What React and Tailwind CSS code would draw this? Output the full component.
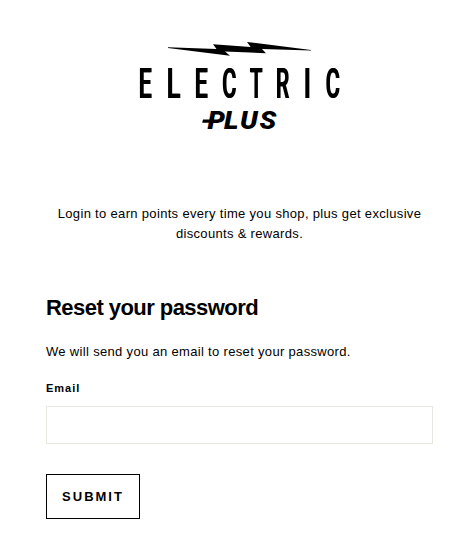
const WORDMARK = [
  { char: "E", x: 140, width: 12 },
  { char: "L", x: 168, width: 12.5 },
  { char: "E", x: 196, width: 12 },
  { char: "C", x: 223, width: 13.5 },
  { char: "T", x: 250, width: 13 },
  { char: "R", x: 277, width: 12.5 },
  { char: "I", x: 305.5, width: 4.5 },
  { char: "C", x: 326.5, width: 13.5 },
];

// ink box of each capital in Roboto Medium, in em: [left bearing, width]
const INK = {
  E: [0.073, 0.46],
  L: [0.073, 0.44],
  C: [0.055, 0.56],
  T: [0.02, 0.57],
  R: [0.073, 0.53],
  I: [0.085, 0.123],
};

const SIZE = 42;
// extra stem weight added by the drop shadow
const SPREAD = 1.4;

const SUB = [
  { char: "P", x: 207.5 },
  { char: "L", x: 224 },
  { char: "U", x: 240 },
  { char: "S", x: 259.5 },
];

function Logo() {
  return (
    <svg
      role="img"
      aria-label="Electric Plus"
      className="h-[96px] w-[210px] fill-black"
      viewBox="135 38 210 96"
    >
      <path d="M168 47.2 L216.5 48.9 L213 44.2 L250.7 47 L247 41.9 L311 50 V50.6 L262 48.9 L266 53.2 L225 51.4 L230 55.8 L168 48 Z" />
      <g className="[filter:drop-shadow(1.4px_0_0_#000)]">
        {WORDMARK.map(({ char, x, width }, i) => {
          const [left, ink] = INK[char];
          const scale = (width - SPREAD) / (ink * SIZE);
          return (
            <text
              key={i}
              transform={`translate(${x - left * SIZE * scale} 98) scale(${scale} 1)`}
              fontSize={SIZE}
              className="font-['Roboto',sans-serif] font-medium"
            >
              {char}
            </text>
          );
        })}
      </g>
      {SUB.map(({ char, x }) => (
        <text
          key={char}
          transform={`translate(${x} 129) scale(1.1 1)`}
          className="font-['Roboto',sans-serif] text-[25px] font-black italic"
        >
          {char}
        </text>
      ))}
      <path d="M203 119.5h10l-.8 3.2h-10z" />
    </svg>
  );
}

function App() {
  return (
    <main className="h-[549px] bg-white pr-[29px] pl-[46px] font-['Liberation_Sans',Arial,sans-serif] text-black">
      <header className="flex flex-col items-center pt-[38px]">
        <Logo />
        <p className="mt-[70px] text-center text-[13px] leading-5 tracking-[0.325px]">
          Login to earn points every time you shop, plus get exclusive
          <br />
          discounts &amp; rewards.
        </p>
      </header>

      <form onSubmit={(e) => e.preventDefault()}>
        <h1 className="mt-[50px] text-[22px] leading-7 font-bold tracking-[-0.55px]">
          Reset your password
        </h1>
        <p className="mt-5 text-[13px] leading-5 tracking-[0.325px]">
          We will send you an email to reset your password.
        </p>
        <label
          htmlFor="email"
          className="mt-[18px] block text-[11px] leading-4 font-bold tracking-[1px]"
        >
          Email
        </label>
        <input
          id="email"
          type="email"
          className="mt-[10px] block h-[38px] w-full border border-[#e8e8e1] px-3 text-[13px] outline-none"
        />
        <button
          type="submit"
          className="mt-[30px] block h-[45px] w-[94px] border border-black bg-white text-[13px] font-bold tracking-[2px]"
        >
          SUBMIT
        </button>
      </form>
    </main>
  );
}

export default App;
